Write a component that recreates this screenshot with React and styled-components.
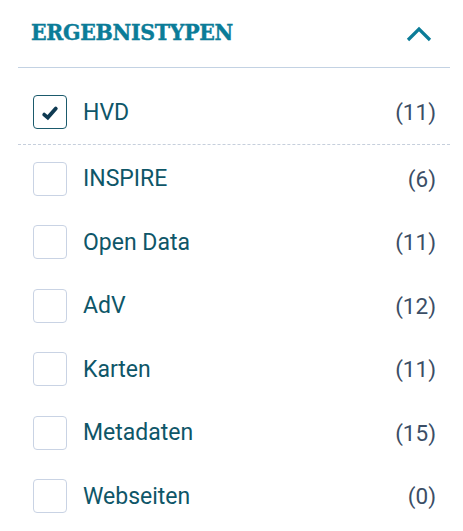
import React, { useState } from "react";
import styled, { createGlobalStyle } from "styled-components";

const GlobalStyle = createGlobalStyle`
	body {
		margin: 0;
		background: #ffffff;
		font-family: Roboto, "Noto Sans", sans-serif;
	}
`;

const Panel = styled.section`
	width: 432px;
	margin-left: 18px;
`;

const Header = styled.div`
	height: 68px;
	display: flex;
	align-items: center;
	justify-content: space-between;
	padding: 0 18px 0 13px;
	border-bottom: 1px solid #c3d2e3;
	box-sizing: border-box;
`;

const Title = styled.h2`
	margin: 0;
	margin-top: -4px;
	font-family: "DejaVu Serif", serif;
	font-weight: 700;
	font-size: 20.5px;
	letter-spacing: -0.3px;
	-webkit-text-stroke: 0.4px #0b7c98;
	transform: scaleY(1.08);
	color: #0b7c98;
`;

const Toggle = styled.button`
	border: 0;
	background: none;
	padding: 0;
	width: 26px;
	height: 18px;
	display: flex;
	align-items: center;
	justify-content: center;
	color: #0b7c98;
	cursor: pointer;
`;

const List = styled.ul`
	list-style: none;
	margin: 0;
	padding: 14px 0 0;
`;

const Item = styled.li`
	height: ${(p) => (p.$first ? "63px" : "63.5px")};
	display: flex;
	align-items: center;
	padding: 0 14px 0 15px;
	box-sizing: border-box;
	border-bottom: ${(p) => (p.$first ? "1px dashed #c6cfdc" : "none")};
	padding-bottom: ${(p) => (p.$first ? "2px" : "0")};
	margin-bottom: ${(p) => (p.$first ? "2px" : "0")};
`;

const Box = styled.span`
	width: 34px;
	height: 34px;
	box-sizing: border-box;
	border-radius: 4px;
	border: 1px solid ${(p) => (p.$checked ? "#1b5a6c" : "#c9d3e4")};
	display: flex;
	align-items: center;
	justify-content: center;
	flex-shrink: 0;
	cursor: pointer;
`;

const Label = styled.span`
	margin-left: 16px;
	flex: 1;
	font-size: 23px;
	color: #0e5668;
`;

const Count = styled.span`
	font-size: 22.5px;
	color: #3b4e66;
`;

const items = [
	{ label: "HVD", count: 11, checked: true },
	{ label: "INSPIRE", count: 6 },
	{ label: "Open Data", count: 11 },
	{ label: "AdV", count: 12 },
	{ label: "Karten", count: 11 },
	{ label: "Metadaten", count: 15 },
	{ label: "Webseiten", count: 0 },
];

const Check = () => (
	<svg width="18" height="16" viewBox="0 0 18 16" style={{ marginTop: 2 }}>
		<path
			d="M3.2 9.6 L6.8 12.6 L14.8 3.6"
			fill="none"
			stroke="#0f3a52"
			strokeWidth="3.8"
			strokeLinecap="round"
			strokeLinejoin="miter"
		/>
	</svg>
);

const App = () => {
	const [state, setState] = useState(items.map((i) => !!i.checked));

	return (
		<Panel>
			<GlobalStyle />
			<Header>
				<Title>ERGEBNISTYPEN</Title>
				<Toggle aria-label="einklappen">
					<svg width="26" height="16" viewBox="0 0 26 16">
						<path d="M2 14 L13 3 L24 14" fill="none" stroke="currentColor" strokeWidth="3.2" />
					</svg>
				</Toggle>
			</Header>
			<List>
				{items.map((item, i) => (
					<Item key={item.label} $first={i === 0}>
						<Box
							$checked={state[i]}
							onClick={() => setState((s) => s.map((v, j) => (j === i ? !v : v)))}
						>
							{state[i] && <Check />}
						</Box>
						<Label>{item.label}</Label>
						<Count>({item.count})</Count>
					</Item>
				))}
			</List>
		</Panel>
	);
};

export default App;
